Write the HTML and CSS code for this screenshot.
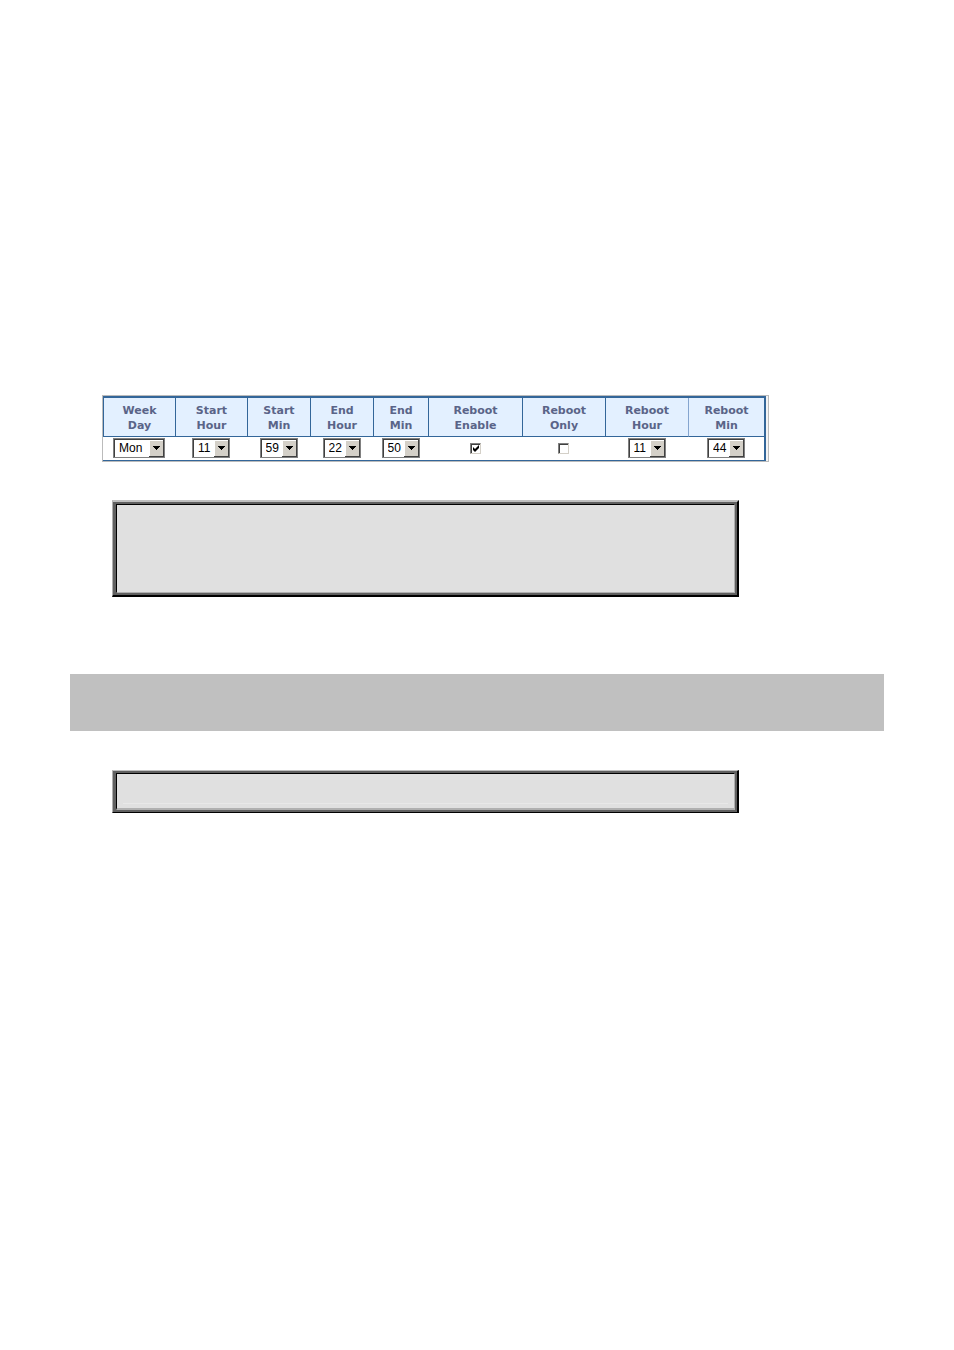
FILE: index.html
```
<!DOCTYPE html>
<html lang="en">
	<head>
		<meta charset="UTF-8">
		<meta name="viewport" content="width=device-width, initial-scale=1.0">
		<title>Reboot Schedule</title>

		<link rel="stylesheet" href="styles.css">
	</head>

	<body>
		<main>
			<form class="schedule">
				<table>
					<colgroup>
						<col class="wide">
						<col class="wide">
						<col class="medium">
						<col class="medium">
						<col class="narrow">
						<col class="enable">
						<col class="reboot">
						<col class="reboot">
						<col class="last">
					</colgroup>

					<thead>
						<tr>
							<th id="week-day">Week<br> Day</th>
							<th id="start-hour">Start<br> Hour</th>
							<th id="start-min">Start<br> Min</th>
							<th id="end-hour">End<br> Hour</th>
							<th id="end-min">End<br> Min</th>
							<th id="reboot-enable">Reboot<br> Enable</th>
							<th id="reboot-only">Reboot<br> Only</th>
							<th id="reboot-hour">Reboot<br> Hour</th>
							<th id="reboot-min" class="soft">Reboot<br> Min</th>
						</tr>
					</thead>

					<tbody>
						<tr>
							<td><select class="day" name="week_day" aria-labelledby="week-day"><option>Mon</option></select></td>
							<td><select name="start_hour" aria-labelledby="start-hour"><option>11</option></select></td>
							<td><select name="start_min" aria-labelledby="start-min"><option>59</option></select></td>
							<td><select name="end_hour" aria-labelledby="end-hour"><option>22</option></select></td>
							<td><select name="end_min" aria-labelledby="end-min"><option>50</option></select></td>
							<td><input type="checkbox" name="reboot_enable" aria-labelledby="reboot-enable" checked></td>
							<td><input type="checkbox" name="reboot_only" aria-labelledby="reboot-only"></td>
							<td><select name="reboot_hour" aria-labelledby="reboot-hour"><option>11</option></select></td>
							<td><select name="reboot_min" aria-labelledby="reboot-min"><option>44</option></select></td>
						</tr>
					</tbody>
				</table>
			</form>

			<section class="panel">
				<div class="panel-body"></div>
			</section>

			<div class="band"></div>

			<section class="panel small">
				<div class="panel-body">
					<hr>
				</div>
			</section>
		</main>
	</body>
</html>
```
FILE: styles.css
```
body {
	margin: 0;
	background-color: white;
	font-family: "Liberation Sans", Arial, sans-serif;
}

main {
	padding: 395px 70px 64px;
}

/* schedule table */
.schedule {
	max-width: 663px;
	margin-left: 32px;
	padding-right: 2px;
	border: 1px solid #bbbbbb;
	background-color: #f4f4f4;
}

table {
	width: 100%;
	table-layout: fixed;
	border-spacing: 0;
	border: 0 solid #336699;
	border-width: 2px 2px 1px 0;
	background-color: white;
}

.wide {
	width: 72px;
}

.medium {
	width: 63px;
}

.narrow {
	width: 55px;
}

.enable {
	width: 94px;
}

.reboot {
	width: 83px;
}

.last {
	width: 76px;
}

th {
	padding: 5px 0 3px;
	border-left: 1px solid #336699;
	border-bottom: 1px solid #336699;
	background-color: #e3f0ff;
	color: #5a6488;
	font: bold 11px/15px "DejaVu Sans", Verdana, sans-serif;
}

th.soft {
	border-left-color: #85a5cf;
}

td {
	height: 21px;
	padding: 0 0 2px;
	line-height: 20px;
	font-size: 12px;
	text-align: center;
	vertical-align: middle;
}

select,
input {
	appearance: none;
	box-sizing: border-box;
	margin: 0;
	border: 1px solid #808080;
	border-radius: 0;
	box-shadow: inset 1px 1px #404040;
	vertical-align: middle;
}

select {
	width: 38px;
	height: 20px;
	padding: 0 0 0 5px;
	background: white url("data:image/svg+xml,%3Csvg xmlns='http://www.w3.org/2000/svg' width='15' height='17' shape-rendering='crispEdges'%3E%3Cpath fill='%23404040' d='M0 0h15v17H0z'/%3E%3Cpath fill='%23fff' d='M0 0h14v16H0z'/%3E%3Cpath fill='%23d4d0c8' d='M1 1h13v15H1z'/%3E%3Cpath d='M4 6h7v1H4zM5 7h5v1H5zM6 8h3v1H6zM7 9h1v1H7z'/%3E%3C/svg%3E") no-repeat right bottom;
	color: black;
	font: 12px/18px "Liberation Sans", Arial, sans-serif;
}

.day {
	width: 52px;
}

input {
	width: 11px;
	height: 11px;
	border-right-color: #d4d0c8;
	border-bottom-color: #d4d0c8;
	background-color: white;
}

input:checked {
	background-image: url("data:image/svg+xml,%3Csvg xmlns='http://www.w3.org/2000/svg' width='9' height='9'%3E%3Cpath d='M2 3l2 2 4-4v3L4 8 2 6z'/%3E%3C/svg%3E");
}

/* bevelled boxes */
.panel {
	max-width: 621px;
	margin: 38px 0 0 42px;
	padding: 2px 0 2px 3px;
	border: solid;
	border-width: 2px 2px 2px 1px;
	border-color: #c0c0c0 black black #b0b0b0;
	background-color: #606060;
}

.panel-body {
	height: 87px;
	margin-right: 2px;
	border: 1px solid;
	border-color: black #b0b0b0 #b0b0b0 black;
	background-color: #e0e0e0;
}

.band {
	height: 57px;
	margin: 77px 0 39px;
	background-color: #c0c0c0;
}

.panel.small {
	margin-top: 0;
	border-top-width: 1px;
	border-bottom-width: 1px;
}

.small .panel-body {
	display: flex;
	align-items: flex-end;
	height: 34px;
	border-bottom-width: 2px;
}

hr {
	flex: 1;
	margin: 0 6px 4px;
	border: 0;
	border-top: 1px solid #e8e8e8;
}
```
